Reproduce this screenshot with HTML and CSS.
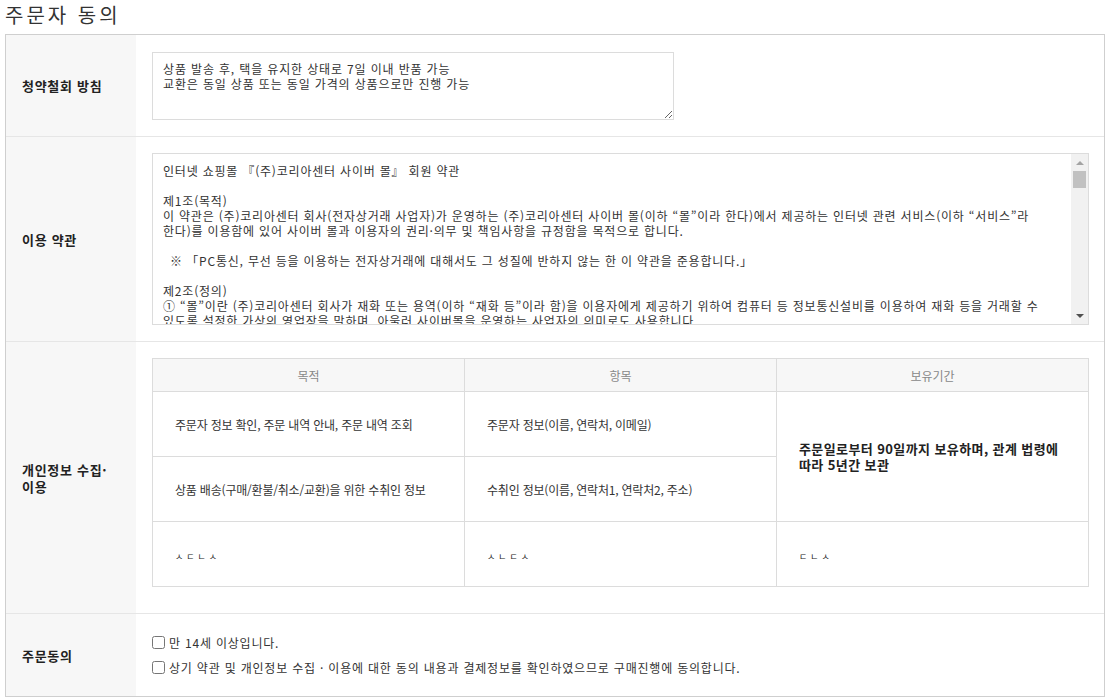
FILE: index.html
```html
<!DOCTYPE html>
<html lang="ko">
<head>
<meta charset="utf-8">
<title>주문자 동의</title>
<link rel="stylesheet" href="styles.css">
</head>
<body>
<h2 class="title">주문자 동의</h2>
<div class="box">
  <div class="row">
    <div class="label">청약철회 방침</div>
    <div class="content content-first">
      <textarea class="policy" readonly>상품 발송 후, 택을 유지한 상태로 7일 이내 반품 가능
교환은 동일 상품 또는 동일 가격의 상품으로만 진행 가능</textarea>
    </div>
  </div>
  <div class="row">
    <div class="label">이용 약관</div>
    <div class="content">
      <div class="terms">
        <div class="terms-text">
          <div class="line">인터넷 쇼핑몰 『(주)코리아센터 사이버 몰』 회원 약관</div>
          <div class="line">&nbsp;</div>
          <div class="line">제1조(목적)</div>
          <div class="line">이 약관은 (주)코리아센터 회사(전자상거래 사업자)가 운영하는 (주)코리아센터 사이버 몰(이하 “몰”이라 한다)에서 제공하는 인터넷 관련 서비스(이하 “서비스”라</div>
          <div class="line">한다)를 이용함에 있어 사이버 몰과 이용자의 권리·의무 및 책임사항을 규정함을 목적으로 합니다.</div>
          <div class="line">&nbsp;</div>
          <div class="line indent">※ 「PC통신, 무선 등을 이용하는 전자상거래에 대해서도 그 성질에 반하지 않는 한 이 약관을 준용합니다.」</div>
          <div class="line">&nbsp;</div>
          <div class="line">제2조(정의)</div>
          <div class="line">① “몰”이란 (주)코리아센터 회사가 재화 또는 용역(이하 “재화 등”이라 함)을 이용자에게 제공하기 위하여 컴퓨터 등 정보통신설비를 이용하여 재화 등을 거래할 수</div>
          <div class="line">있도록 설정한 가상의 영업장을 말하며, 아울러 사이버몰을 운영하는 사업자의 의미로도 사용합니다.</div>
        </div>
        <div class="scrollbar">
          <div class="sb-btn"><span class="arrow-up"></span></div>
          <div class="sb-track"><div class="sb-thumb"></div></div>
          <div class="sb-btn"><span class="arrow-down"></span></div>
        </div>
      </div>
    </div>
  </div>
  <div class="row">
    <div class="label">개인정보 수집·<br>이용</div>
    <div class="content content-table">
      <table class="info">
        <thead>
          <tr><th>목적</th><th>항목</th><th>보유기간</th></tr>
        </thead>
        <tbody>
          <tr>
            <td>주문자 정보 확인, 주문 내역 안내, 주문 내역 조회</td>
            <td>주문자 정보(이름, 연락처, 이메일)</td>
            <td rowspan="2" class="keep">주문일로부터 90일까지 보유하며, 관계 법령에<br>따라 5년간 보관</td>
          </tr>
          <tr>
            <td>상품 배송(구매/환불/취소/교환)을 위한 수취인 정보</td>
            <td>수취인 정보(이름, 연락처1, 연락처2, 주소)</td>
          </tr>
          <tr>
            <td><span class="jamo">ㅅㄷㄴㅅ</span></td>
            <td><span class="jamo">ㅅㄴㄷㅅ</span></td>
            <td><span class="jamo">ㄷㄴㅅ</span></td>
          </tr>
        </tbody>
      </table>
    </div>
  </div>
  <div class="row">
    <div class="label">주문동의</div>
    <div class="content">
      <label class="check"><input type="checkbox"><span>만 14세 이상입니다.</span></label>
      <label class="check"><input type="checkbox"><span>상기 약관 및 개인정보 수집 · 이용에 대한 동의 내용과 결제정보를 확인하였으므로 구매진행에 동의합니다.</span></label>
    </div>
  </div>
</div>
</body>
</html>
```

FILE: styles.css
```css
html, body {
  margin: 0;
  padding: 0;
  background: #fff;
}
body {
  font-family: "Noto Sans CJK KR", "Noto Sans", sans-serif;
  font-size: 12px;
  color: #333;
}
.title {
  margin: 0 0 0 5px;
  height: 34px;
  line-height: 29px;
  font-size: 20px;
  font-weight: normal;
  letter-spacing: 3px;
  color: #333;
}
.box {
  margin: 0 3px 0 5px;
  border: 1px solid #cfcfcf;
}
.row {
  display: grid;
  grid-template-columns: 130px 1fr;
  border-top: 1px solid #e6e6e6;
}
.row:first-child {
  border-top: 0;
}
.label {
  background: #f7f7f7;
  padding: 0 16px;
  display: flex;
  align-items: center;
  font-size: 13px;
  font-weight: bold;
  letter-spacing: 0.7px;
  color: #222;
  line-height: 17px;
}
.content {
  padding: 16px 15px 16px 16px;
}
.content-first {
  padding-top: 17px;
}
.content-table {
  padding-bottom: 26px;
}
.policy {
  display: block;
  box-sizing: border-box;
  width: 522px;
  height: 68px;
  margin: 0;
  padding: 8px 10px;
  border: 1px solid #dcdcdc;
  font-family: inherit;
  font-size: 12px;
  line-height: 15px;
  letter-spacing: 0.85px;
  color: #333;
  resize: both;
  outline: none;
}
.terms {
  display: flex;
  height: 172px;
  box-sizing: border-box;
  border: 1px solid #dcdcdc;
}
.terms-text {
  flex: 1;
  overflow: hidden;
  padding: 9px 10px 0;
  line-height: 15px;
  letter-spacing: 0.8px;
  color: #333;
}
.line {
  white-space: nowrap;
}
.indent {
  padding-left: 7px;
}
.scrollbar {
  width: 17px;
  background: #f1f1f1;
  display: flex;
  flex-direction: column;
}
.sb-btn {
  height: 17px;
  display: flex;
  align-items: center;
  justify-content: center;
}
.arrow-up {
  width: 0;
  height: 0;
  border-left: 4px solid transparent;
  border-right: 4px solid transparent;
  border-bottom: 4px solid #a3a3a3;
}
.arrow-down {
  width: 0;
  height: 0;
  border-left: 4px solid transparent;
  border-right: 4px solid transparent;
  border-top: 4px solid #505050;
}
.sb-track {
  flex: 1;
  padding: 0 2px;
}
.sb-thumb {
  height: 17px;
  background: #c1c1c1;
}
.info {
  width: 100%;
  border-collapse: collapse;
  border: 1px solid #dcdcdc;
  table-layout: fixed;
}
.info th {
  height: 32px;
  padding: 0;
  background: #f7f7f7;
  border: 1px solid #dcdcdc;
  font-weight: normal;
  color: #888;
  font-size: 12px;
}
.info td {
  height: 64px;
  padding: 0 22px;
  border: 1px solid #dcdcdc;
  color: #333;
  font-size: 12px;
  letter-spacing: -0.2px;
}
.info td.keep {
  font-size: 13px;
  font-weight: bold;
  color: #222;
  line-height: 16px;
  letter-spacing: 0.4px;
}
.jamo {
  font-size: 9px;
  letter-spacing: 3px;
  color: #222;
}
.check {
  display: flex;
  align-items: center;
  height: 25px;
  color: #333;
  letter-spacing: 0.8px;
}
.check input {
  margin: 0 4px 0 0;
  width: 13px;
  height: 13px;
}
```
